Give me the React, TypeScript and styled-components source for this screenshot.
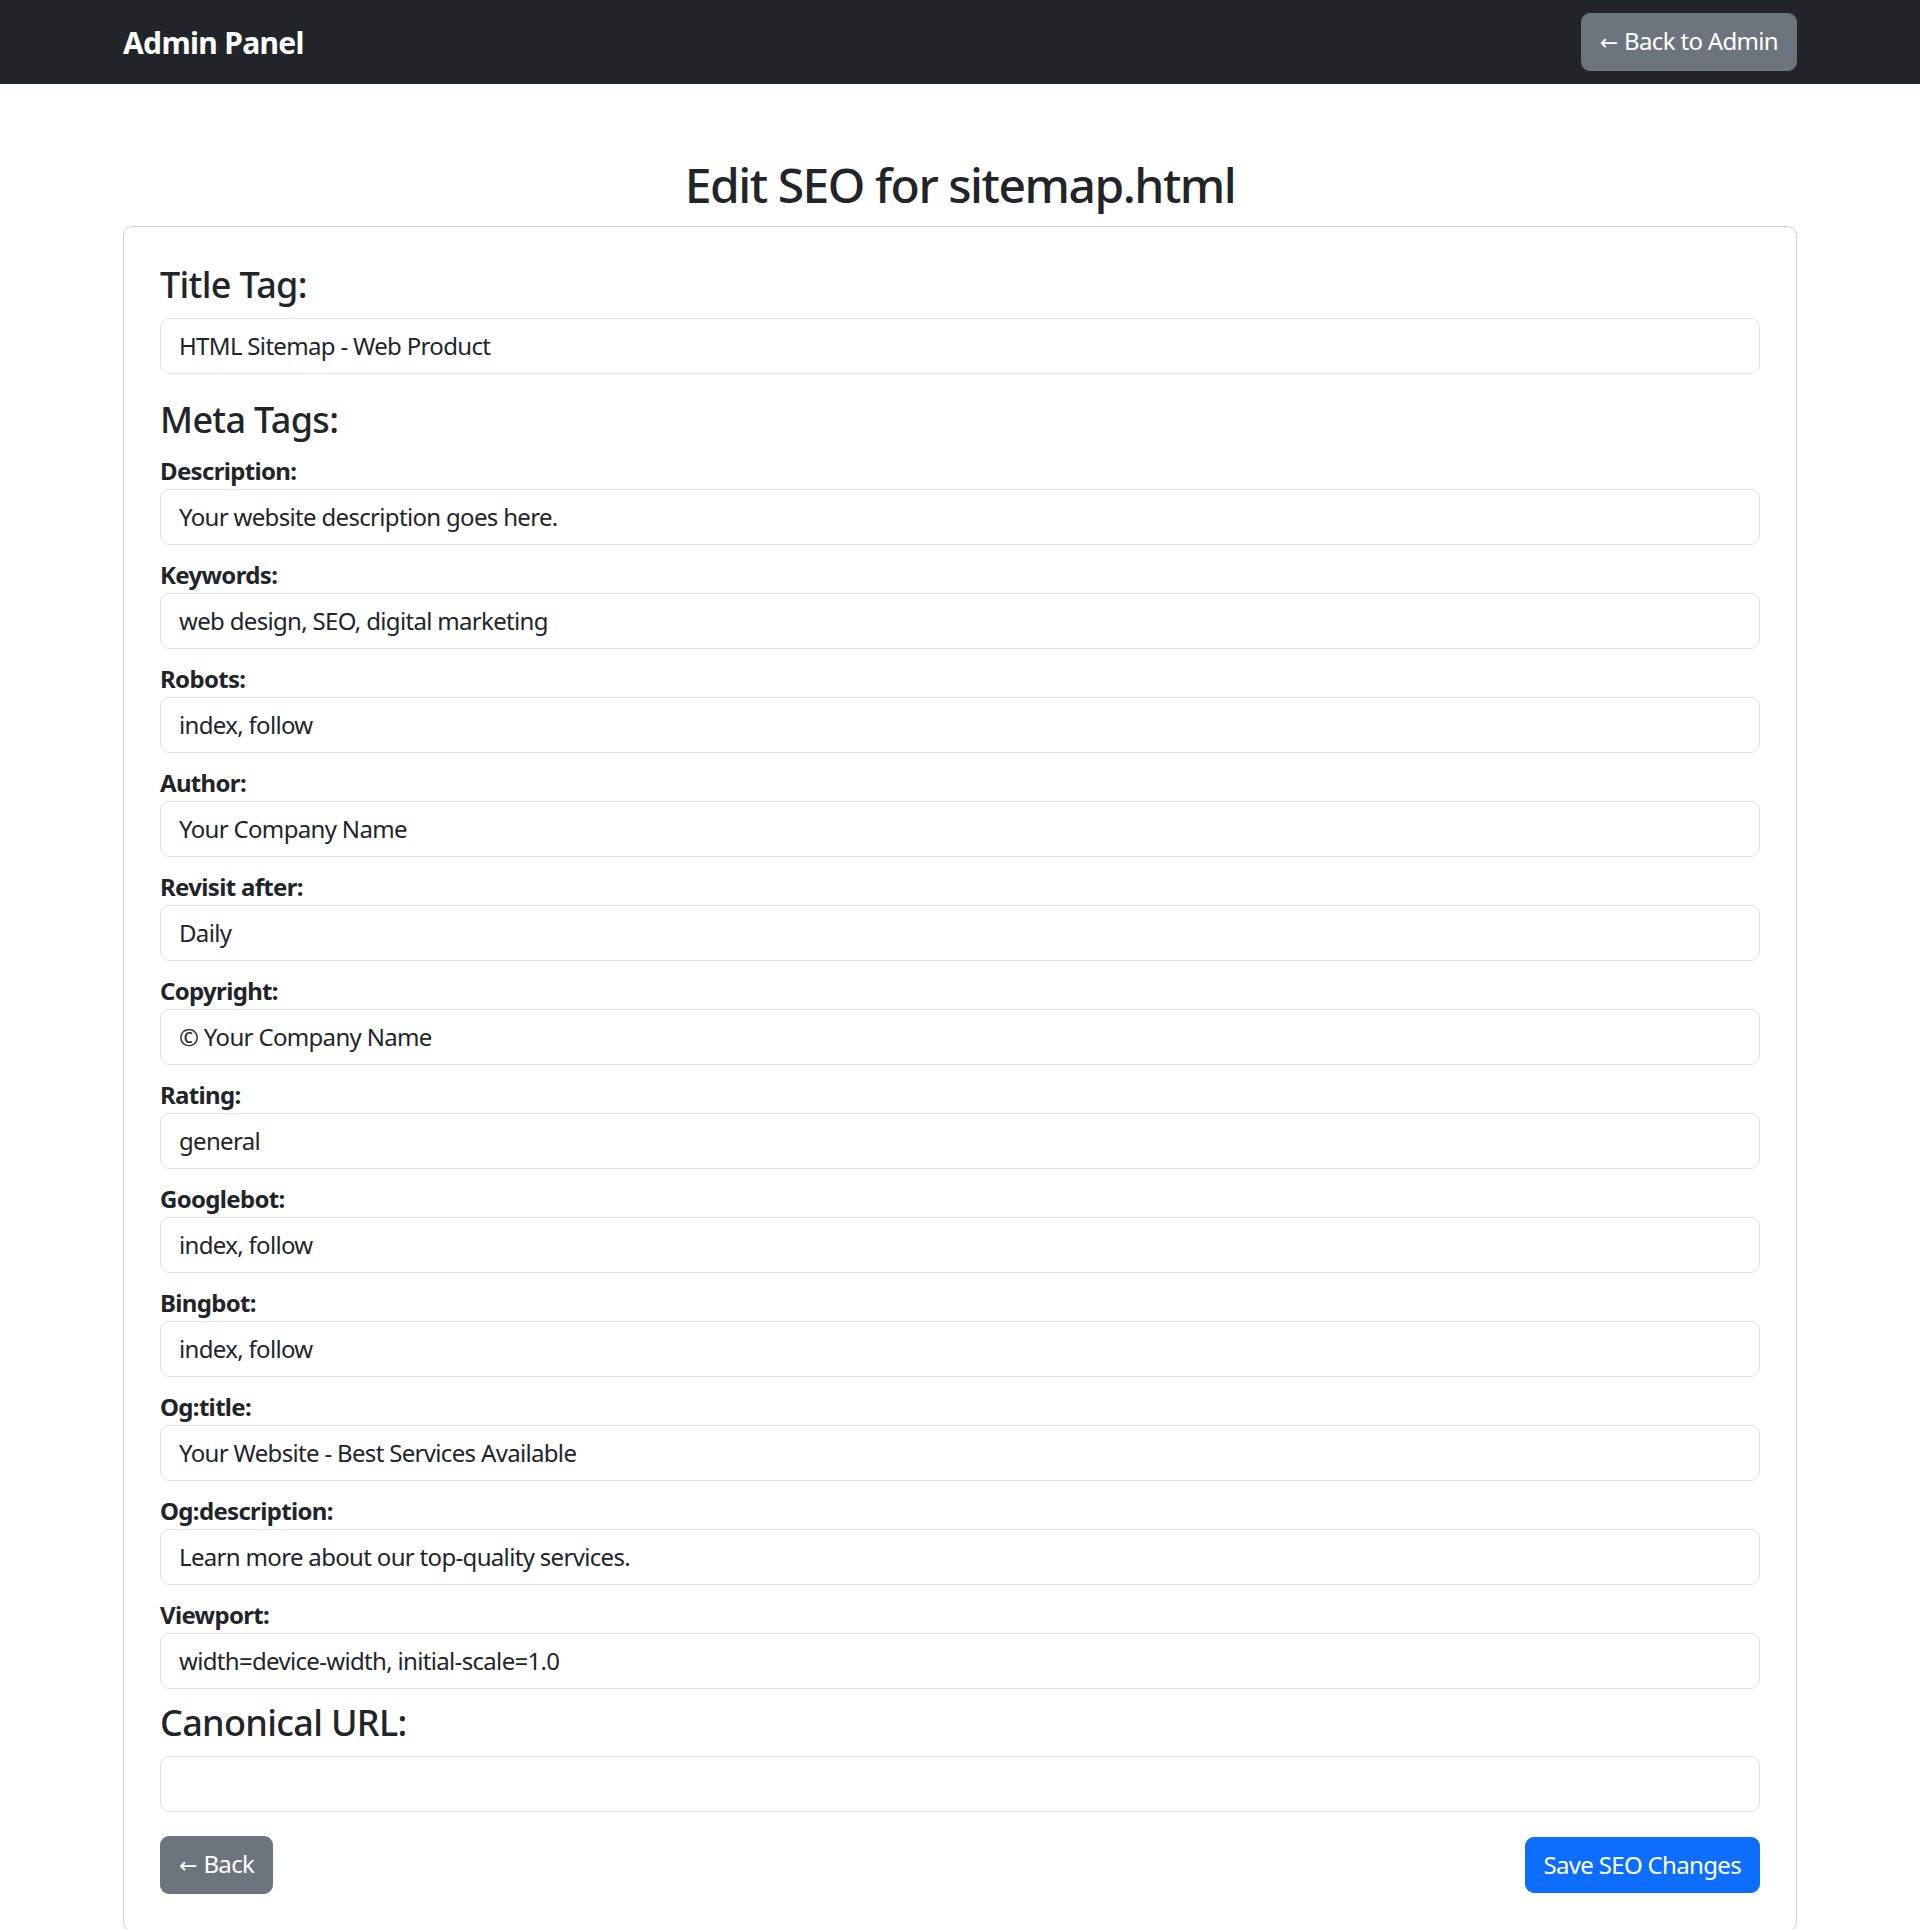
import React from 'react';
import styled, {createGlobalStyle} from 'styled-components';

const GlobalStyle = createGlobalStyle`
  * {
    box-sizing: border-box;
  }
  body {
    margin: 0;
    background: #fff;
    color: #212529;
    font-family: "Noto Sans", "Open Sans", sans-serif;
    font-size: 24px;
    line-height: 1.5;
    letter-spacing: -0.028em;
  }
`;

const Navbar = styled.nav`
  background-color: #212529;
  padding: 12px 0;
`;

const NavInner = styled.div`
  width: 1674px;
  margin: 0 auto;
  display: flex;
  align-items: center;
  justify-content: space-between;
`;

const Brand = styled.a`
  color: #fff;
  font-size: 30px;
  font-weight: 700;
  line-height: 45px;
  padding: 7.5px 0;
  text-decoration: none;
`;

const Button = styled.button<{ $variant?: 'primary' | 'secondary' }>`
  font-family: inherit;
  font-size: 24px;
  line-height: 36px;
  letter-spacing: inherit;
  padding: 9px 18px;
  border-radius: 9px;
  border: 1px solid ${p => (p.$variant === 'primary' ? '#0d6efd' : '#6c757d')};
  background-color: ${p => (p.$variant === 'primary' ? '#0d6efd' : '#6c757d')};
  color: #fff;
  cursor: pointer;
`;

// the arrow glyph in Noto Sans is tiny, DejaVu draws it like the original
const Arrow = styled.span`
  font-family: "DejaVu Sans", sans-serif;
  font-size: 22px;
  letter-spacing: 0;
  margin-right: 6px;
`;

const Main = styled.main`
  width: 1674px;
  margin: 72px auto 0;
`;

const PageTitle = styled.h2`
  margin: 0 0 12px;
  font-size: 48px;
  font-weight: 500;
  line-height: 1.2;
  letter-spacing: -0.031em;
  text-align: center;
`;

const Card = styled.form`
  border: 1px solid rgba(0, 0, 0, 0.175);
  border-radius: 9px;
  padding: 36px;
`;

const SectionTitle = styled.h4`
  margin: 0 0 12px;
  font-size: 36px;
  font-weight: 500;
  line-height: 1.2;
`;

const Field = styled.div`
  margin-bottom: 12px;
`;

const Label = styled.label`
  display: block;
  font-weight: 700;
`;

const Input = styled.input<{ $spaced?: boolean }>`
  display: block;
  width: 100%;
  margin-bottom: ${p => (p.$spaced ? '24px' : '0')};
  padding: 9px 18px;
  font-family: inherit;
  font-size: 24px;
  line-height: 36px;
  letter-spacing: inherit;
  color: #212529;
  background: #fff;
  border: 1px solid #dee2e6;
  border-radius: 9px;
  outline: none;
`;

const Actions = styled.div`
  display: flex;
  justify-content: space-between;
  align-items: center;
`;

const metaTags: [string, string][] = [
  ['Description', 'Your website description goes here.'],
  ['Keywords', 'web design, SEO, digital marketing'],
  ['Robots', 'index, follow'],
  ['Author', 'Your Company Name'],
  ['Revisit after', 'Daily'],
  ['Copyright', '© Your Company Name'],
  ['Rating', 'general'],
  ['Googlebot', 'index, follow'],
  ['Bingbot', 'index, follow'],
  ['Og:title', 'Your Website - Best Services Available'],
  ['Og:description', 'Learn more about our top-quality services.'],
  ['Viewport', 'width=device-width, initial-scale=1.0'],
];

export default function App() {
  return (
    <>
      <GlobalStyle />
      <Navbar>
        <NavInner>
          <Brand href="#">Admin Panel</Brand>
          <Button type="button" $variant="secondary"><Arrow>←</Arrow>Back to Admin</Button>
        </NavInner>
      </Navbar>
      <Main>
        <PageTitle>Edit SEO for sitemap.html</PageTitle>
        <Card onSubmit={e => e.preventDefault()}>
          <SectionTitle>Title Tag:</SectionTitle>
          <Input $spaced defaultValue="HTML Sitemap - Web Product" />

          <SectionTitle>Meta Tags:</SectionTitle>
          {metaTags.map(([name, value]) => (
            <Field key={name}>
              <Label>{name}:</Label>
              <Input defaultValue={value} />
            </Field>
          ))}

          <SectionTitle>Canonical URL:</SectionTitle>
          <Input $spaced defaultValue="" />

          <Actions>
            <Button type="button" $variant="secondary"><Arrow>←</Arrow>Back</Button>
            <Button type="submit" $variant="primary">Save SEO Changes</Button>
          </Actions>
        </Card>
      </Main>
    </>
  );
}
